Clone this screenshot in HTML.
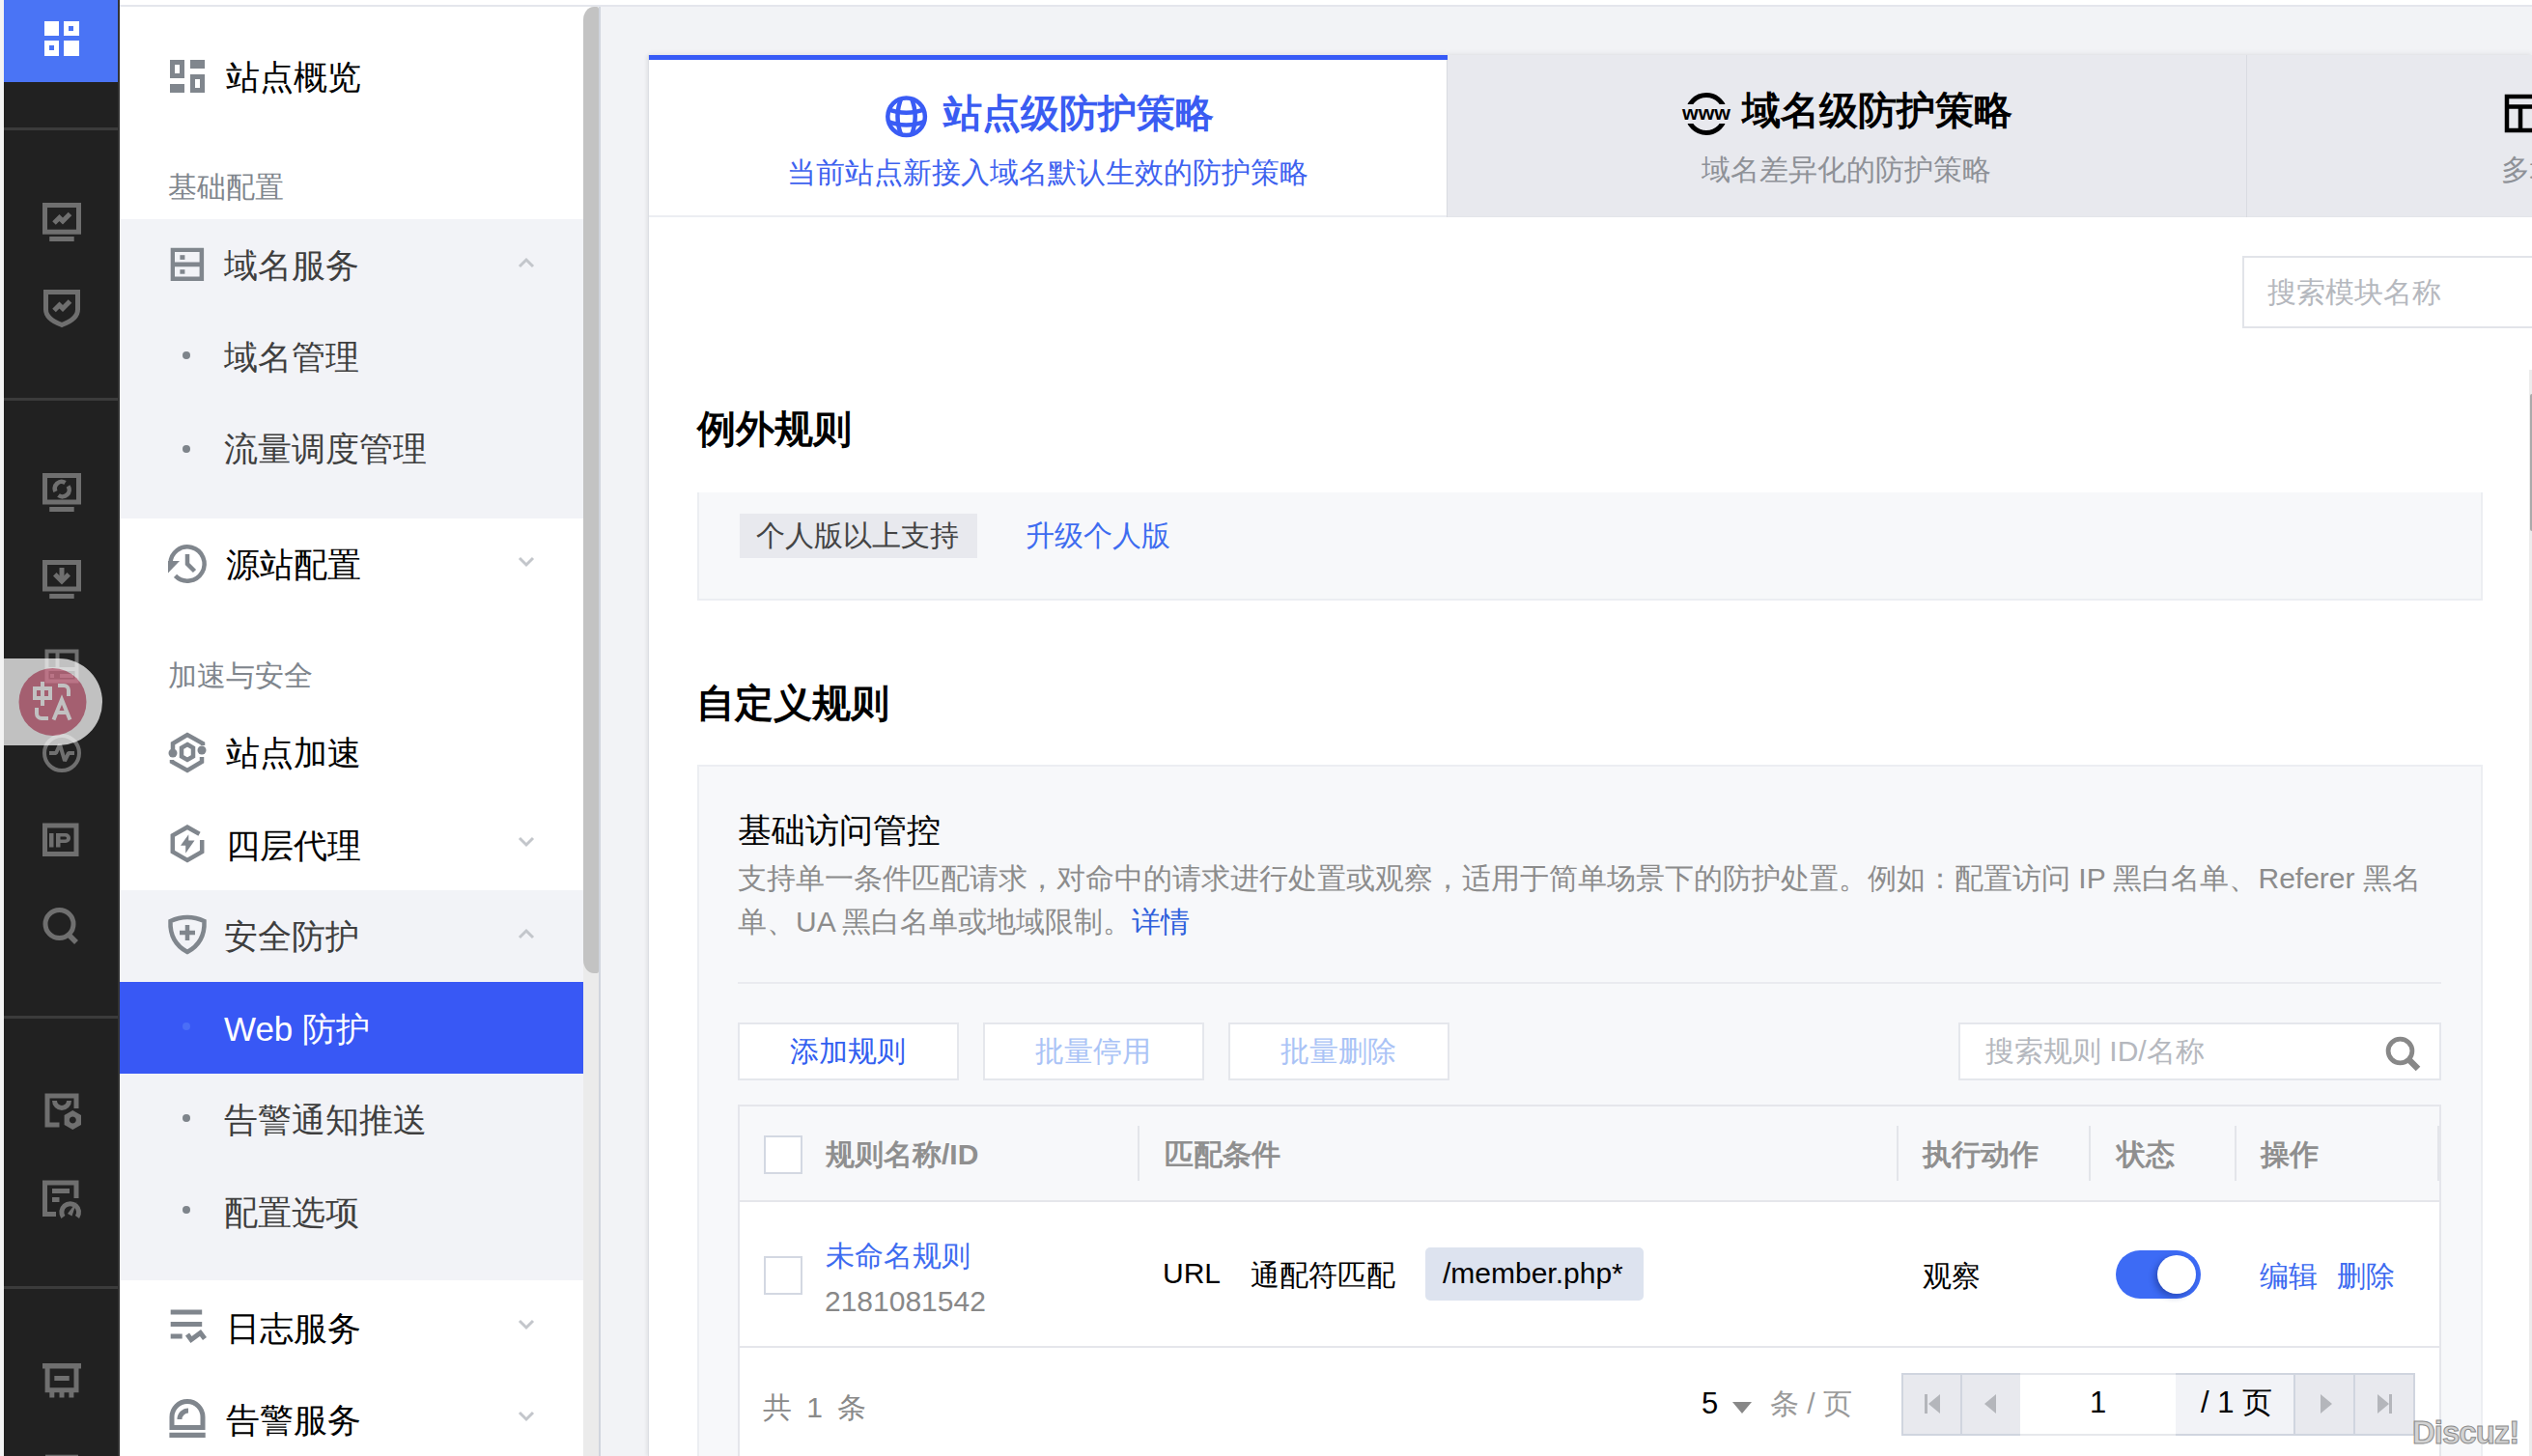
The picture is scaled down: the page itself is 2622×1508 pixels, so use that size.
<!DOCTYPE html>
<html><head><meta charset="utf-8">
<style>
*{margin:0;padding:0;box-sizing:border-box}
html,body{width:2622px;height:1508px;overflow:hidden;background:#fff;font-family:"Liberation Sans",sans-serif}
.a{position:absolute}
.t{position:absolute;white-space:nowrap;line-height:1}
.t i{display:inline-block;width:1em;font-style:normal;text-align:center}
#strip{left:0;top:0;width:4px;height:1508px;background:#f3f3f3}
#dark{left:4px;top:0;width:120px;height:1508px;background:#212121;border-right:2px solid #333}
#bluetop{left:4px;top:0;width:118px;height:85px;background:#4a74f5}
.sep{left:4px;width:118px;height:3px;background:#3b3b3b}
.ico{left:44px;width:40px;height:40px}
#menu{left:124px;top:0;width:480px;height:1508px;background:#fff}
.grp{left:124px;width:480px;background:#f2f3f7}
.mi{left:234px;font-size:35px;color:#000}
.mi2{left:232px;font-size:35px;color:#3f3f3f}
.hd{left:174px;font-size:30px;color:#80868d}
.dot{left:189px;width:8px;height:8px;border-radius:50%;background:#7e848b}
.chev{left:537px;width:16px;height:10px}
#topline{left:124px;top:5px;width:2498px;height:2px;background:#e4e6ec}
#right{left:622px;top:7px;width:2000px;height:1501px;background:#f2f3f6}
#sbtrack{left:604px;top:7px;width:18px;height:1501px;background:linear-gradient(#fff 0,#fff 980px,#ebebeb 980px);border-right:2px solid #d0d5de}
#sbthumb{left:604px;top:7px;width:16px;height:1001px;background:#c3c3c3;border-radius:11px 2px 2px 11px/14px 2px 2px 14px}
</style></head><body>
<div id="strip" class="a"></div>
<div id="dark" class="a"></div>
<div id="bluetop" class="a"></div>
<div class="a sep" style="top:132px"></div>
<div class="a sep" style="top:412px"></div>
<div class="a sep" style="top:1052px"></div>
<div class="a sep" style="top:1332px"></div>

<div id="menu" class="a"></div>
<div id="topline" class="a"></div>
<div id="right" class="a"></div>
<div id="sbtrack" class="a"></div>
<div id="sbthumb" class="a"></div>

<!-- menu groups -->
<div class="a grp" style="top:227px;height:310px"></div>
<div class="a grp" style="top:922px;height:404px"></div>
<div class="a" style="left:124px;top:1017px;width:480px;height:95px;background:#3858f5"></div>

<div class="t mi" style="top:62px"><i>站</i><i>点</i><i>概</i><i>览</i></div>
<div class="t hd" style="top:179px"><i>基</i><i>础</i><i>配</i><i>置</i></div>
<div class="t mi2" style="top:257px"><i>域</i><i>名</i><i>服</i><i>务</i></div>
<div class="a dot" style="top:364px"></div>
<div class="t mi2" style="top:352px"><i>域</i><i>名</i><i>管</i><i>理</i></div>
<div class="a dot" style="top:461px"></div>
<div class="t mi2" style="top:447px"><i>流</i><i>量</i><i>调</i><i>度</i><i>管</i><i>理</i></div>
<div class="t mi" style="top:567px"><i>源</i><i>站</i><i>配</i><i>置</i></div>
<div class="t hd" style="top:685px"><i>加</i><i>速</i><i>与</i><i>安</i><i>全</i></div>
<div class="t mi" style="top:762px"><i>站</i><i>点</i><i>加</i><i>速</i></div>
<div class="t mi" style="top:858px"><i>四</i><i>层</i><i>代</i><i>理</i></div>
<div class="t mi2" style="top:952px"><i>安</i><i>全</i><i>防</i><i>护</i></div>
<div class="t" style="left:232px;top:1048px;font-size:35px;color:#fff">Web <i>防</i><i>护</i></div>
<div class="a dot" style="top:1059px;background:#4a6ef7"></div>
<div class="a dot" style="top:1154px"></div>
<div class="t mi2" style="top:1142px"><i>告</i><i>警</i><i>通</i><i>知</i><i>推</i><i>送</i></div>
<div class="a dot" style="top:1249px"></div>
<div class="t mi2" style="top:1238px"><i>配</i><i>置</i><i>选</i><i>项</i></div>
<div class="t mi" style="top:1358px"><i>日</i><i>志</i><i>服</i><i>务</i></div>
<div class="t mi" style="top:1453px"><i>告</i><i>警</i><i>服</i><i>务</i></div>


<!-- menu icons -->
<svg class="a" style="left:124px;top:0" width="480" height="1508" viewBox="124 0 480 1508">
 <g fill="#80868d">
  <!-- overview -->
  <path d="M176 62h15v19h-15z M181 67v9h5v-9z" fill-rule="evenodd"/>
  <rect x="197" y="62" width="15" height="9"/>
  <rect x="176" y="87" width="15" height="9"/>
  <path d="M197 77h15v19h-15z M202 82v9h5v-9z" fill-rule="evenodd"/>
  <!-- domain service -->
  <path d="M176.7 256.7h34.4v34.4h-34.4z M181 261v10.4h25.6v-10.4z M181 276.3v10.1h25.6v-10.1z" fill-rule="evenodd"/>
  <rect x="186.4" y="264.2" width="5" height="4.7"/>
  <rect x="186.4" y="279.2" width="5" height="4.5"/>
 </g>
 <g fill="none" stroke="#80868d" stroke-width="4.5">
  <!-- origin: clock with arrow -->
  <path d="M181.5 596.4A17.6 17.6 0 1 0 176.4 584"/>
  <path d="M194 574v10l7.5 7.5" stroke-width="4.5"/>
  <!-- speed: hexagon ring -->
  <path d="M179 776v-6l15-9l16 9v2 M209 784v5l-15 9l-16-9v-2"/>
  <path d="M194 771l6 3.5v9l-6 3.5l-6-3.5v-9z" stroke-width="4.5"/>
  <!-- L4: hexagon -->
  <path d="M206.5 863.8L194 856.7L178.8 865.4V882.2L194 891L209.2 882.2V870" stroke-linejoin="miter"/>
  <!-- shield plus -->
  <path d="M176.5 954q17.5-8 35 0q1 22-17.5 32q-18.5-10-17.5-32z"/>
  <path d="M194 958v16 M186 966h16" stroke-width="4.5"/>
  <!-- log -->
  <path d="M176.7 1359h32.5 M176.7 1371.4h32.5 M176.7 1384h12" stroke-width="5"/>
  <path d="M194 1382l4 5.5l9.5-7l4.5 6" stroke-width="5" stroke-linejoin="miter"/>
  <!-- alarm -->
  <path d="M178 1478.5v-11a16 16 0 0 1 32 0v11z" stroke-width="5"/>
  <path d="M186 1470a9 9 0 0 1 9-9" stroke-width="5"/>
  <path d="M175.4 1486.4h37.3" stroke-width="5.3"/>
 </g>
 <g fill="#80868d">
  <circle cx="179" cy="780" r="4.5"/>
  <circle cx="209" cy="777" r="4.5"/>
  <path d="M195.3 864.3L187 875.8H192.2V883.7L201.5 870.5H195.3z"/>
  <path d="M174 581h12l-12 12.5z"/>
 </g>
 <g fill="none" stroke="#c3c6cb" stroke-width="3">
  <path d="M538 276l7-7 7 7"/>
  <path d="M538 971l7-7 7 7"/>
  <path d="M538 578l7 7 7-7"/>
  <path d="M538 868l7 7 7-7"/>
  <path d="M538 1368l7 7 7-7"/>
  <path d="M538 1463l7 7 7-7"/>
 </g>
</svg>
<!-- card -->
<div class="a" style="left:671px;top:57px;width:1951px;height:1451px;background:#fff;border-left:1px solid #dcdee3;box-shadow:-2px 0 3px rgba(0,0,0,0.06)"></div>
<div class="a" style="left:672px;top:223px;width:827px;height:2px;background:#eceef2"></div>
<div class="a" style="left:1499px;top:57px;width:1123px;height:168px;background:#e8e9ee;border-bottom:1px solid #e3e5ea;box-shadow:0 -3px 4px rgba(0,0,0,0.035)"></div>
<div class="a" style="left:2326px;top:57px;width:1px;height:168px;background:#d9dbe1"></div>
<div class="a" style="left:1498px;top:62px;width:1px;height:163px;background:#d9dbe1"></div>
<div class="a" style="left:672px;top:57px;width:827px;height:5px;background:#365af6;box-shadow:0 -3px 4px rgba(0,0,0,0.035)"></div>

<!-- sidebar icons -->
<svg class="a" style="left:0;top:0" width="124" height="1508" viewBox="0 0 124 1508">
 <g fill="#fff">
  <rect x="46" y="22" width="15" height="15"/>
  <path d="M66 22h16v15h-16z M71 27v5h5v-5z" fill-rule="evenodd"/>
  <path d="M46 42h15v16h-15z M51 47v5h5v-5z" fill-rule="evenodd"/>
  <rect x="66" y="42" width="16" height="16"/>
 </g>
 <g fill="none" stroke="#6f6f6f" stroke-width="4">
  <!-- monitor trend -->
  <rect x="46.5" y="212.5" width="35" height="27.7" stroke-width="5"/>
  <path d="M51.2 247.5h25.5" stroke-width="5"/>
  <path d="M56 231l5.5-5.5 3.5 3.5 7.5-7.5" stroke-width="5"/>
  <!-- shield trend -->
  <path d="M47.5 302.5h33v18q0 10-16.5 16q-16.5-6-16.5-16z" stroke-width="5"/>
  <path d="M56 321.5l5.5-5.5 3.5 3.5 7.5-7.5" stroke-width="5"/>
  <!-- monitor refresh -->
  <rect x="46.5" y="492.5" width="35" height="27.5" stroke-width="5"/>
  <path d="M51.2 527.5h25.5" stroke-width="5"/>
  <path d="M57.5 509a7 7 0 0 1 10-9 M70.5 503.5a7 7 0 0 1 -10 9.5" stroke-width="4.5"/>
  <!-- monitor download -->
  <rect x="46.5" y="582.5" width="35" height="27.5" stroke-width="5"/>
  <path d="M51.2 617.5h25.5" stroke-width="5"/>
  <path d="M64 588v12" stroke-width="5"/>
  <!-- partial icon behind overlay -->
  <rect x="48.5" y="674.5" width="31" height="31"/>
  <path d="M48 693h32 M59.5 674v19"/>
  <!-- pulse circle -->
  <circle cx="64" cy="780" r="18"/>
  <path d="M51 780h7l4-9l5 17l4-8h6" stroke-width="4" stroke-linejoin="bevel"/>
  <!-- IP -->
  <rect x="46.5" y="855" width="32.5" height="29.5" stroke-width="5"/>
  <!-- search -->
  <circle cx="61.5" cy="957" r="14.5" stroke-width="5"/>
  <path d="M71 968l8 8" stroke-width="5.5"/>
  <!-- doc nut -->
  <path d="M79 1148v-13h-30v30h12.5" stroke-width="5"/>
  <path d="M56.5 1140a7.5 7.5 0 0 0 15 0" stroke-width="5"/>
  <!-- doc gauge -->
  <path d="M79 1241v-16h-32.5v32.5h11.5" stroke-width="5"/>
  <path d="M54 1233.5h18 M54 1242.5h7.5" stroke-width="5"/>
  <path d="M65.4 1260.5A8.85 8.85 0 1 1 80 1260.5" stroke-width="5"/>
  <!-- router -->
  <path d="M44 1414.8h40" stroke-width="5.6"/>
  <path d="M49.1 1417v22.8h29.9v-22.8" stroke-width="5"/>
  <path d="M56.3 1427.5h15.4" stroke-width="5"/>
  <path d="M53.8 1442v5.5 M64 1442v5.5 M73.9 1442v5.5" stroke-width="5"/>
  <rect x="47" y="1506.7" width="34" height="4" fill="#6f6f6f" stroke="none"/>
 </g>
 <g fill="#6f6f6f">
  <path d="M51 863h4.5v14.5h-4.5z M58 863h10a5 5 0 0 1 0 10h-5.5v4.5h-4.5z M62.5 866.5v3h5a1.5 1.5 0 0 0 0-3z" fill-rule="evenodd"/>
  <path d="M75.3 1150l8.7 5v10l-8.7 5l-8.7-5v-10z M75.3 1156.5a3.5 3.5 0 1 0 0.01 0z" fill-rule="evenodd"/>
  <path d="M79.5 1244.5L70 1257L74.5 1259.5z"/>
  <rect x="52" y="698" width="4" height="4"/>
  <path d="M55 596.5l3.5-3.5 5.5 5.5 5.5-5.5 3.5 3.5-9 9z"/>
  <rect x="62" y="698" width="14" height="4"/>
 </g>
 
</svg>
<!-- translate overlay -->
<svg class="a" style="left:0;top:660px;opacity:0.72" width="124" height="140" viewBox="0 660 124 140">
 <path d="M4 682h57a45 45 0 0 1 0 90h-57z" fill="#fff"/>
 <circle cx="54.5" cy="727" r="35" fill="#d7778f"/>
 <g fill="none" stroke="#fff" stroke-width="4">
  <rect x="36" y="713" width="16" height="10"/>
  <path d="M44 706v25"/>
  <path d="M60 710h6a5 5 0 0 1 5 5v6"/>
  <path d="M38 733v6a5 5 0 0 0 5 5h7"/>
  <path d="M55.5 745.5l8.5-21l8.5 21 M59 738h10"/>
 </g>
</svg>

<!-- tabs content -->
<svg class="a" style="left:914px;top:97px" width="48" height="48" viewBox="0 0 48 48">
 <defs><clipPath id="gc"><circle cx="24.6" cy="23.7" r="20"/></clipPath></defs>
 <g fill="none" stroke="#3a5cf5" stroke-width="4.5">
  <circle cx="24.6" cy="23.7" r="19.3"/>
  <g clip-path="url(#gc)">
  <path d="M4 15.5Q24.6 24 45 15.5 M4 28Q24.6 37 45 28"/>
  <path d="M20 3Q11 23.7 20 44.5 M29.2 3Q38.2 23.7 29.2 44.5"/>
  </g>
 </g>
</svg>
<div class="t" style="left:977px;top:97px;font-size:40px;font-weight:bold;color:#3a5cf2"><i>站</i><i>点</i><i>级</i><i>防</i><i>护</i><i>策</i><i>略</i></div>
<div class="t" style="left:815px;top:164px;font-size:30px;color:#3e62ef"><i>当</i><i>前</i><i>站</i><i>点</i><i>新</i><i>接</i><i>入</i><i>域</i><i>名</i><i>默</i><i>认</i><i>生</i><i>效</i><i>的</i><i>防</i><i>护</i><i>策</i><i>略</i></div>
<svg class="a" style="left:1740px;top:93px" width="56" height="50" viewBox="0 0 56 50">
 <defs><clipPath id="wc"><path d="M0 0h56v15h-56z M0 35h56v15h-56z"/></clipPath></defs>
 <circle cx="27" cy="25" r="19.5" fill="none" stroke="#000" stroke-width="5" clip-path="url(#wc)"/>
 <text x="27" y="31" font-family="Liberation Sans" font-weight="bold" font-size="21" text-anchor="middle" fill="#000" textLength="50" lengthAdjust="spacingAndGlyphs">www</text>
</svg>
<div class="t" style="left:1804px;top:94px;font-size:40px;font-weight:bold;color:#000"><i>域</i><i>名</i><i>级</i><i>防</i><i>护</i><i>策</i><i>略</i></div>
<div class="t" style="left:1762px;top:161px;font-size:30px;color:#8e9197"><i>域</i><i>名</i><i>差</i><i>异</i><i>化</i><i>的</i><i>防</i><i>护</i><i>策</i><i>略</i></div>
<svg class="a" style="left:2592px;top:97px" width="40" height="42" viewBox="0 0 40 42">
 <g fill="none" stroke="#000" stroke-width="4.5">
  <rect x="4" y="3" width="36" height="35"/>
  <path d="M4 13.5h36 M18 13.5v24.5"/>
 </g>
</svg>
<div class="t" style="left:2590px;top:161px;font-size:30px;color:#8e9197"><i>多</i><i>域</i><i>名</i></div>

<!-- module search -->
<div class="a" style="left:2322px;top:265px;width:330px;height:75px;background:#fff;border:2px solid #e2e4e9"></div>
<div class="t" style="left:2348px;top:288px;font-size:30px;color:#b5b8be"><i>搜</i><i>索</i><i>模</i><i>块</i><i>名</i><i>称</i></div>

<!-- exception rules -->
<div class="t" style="left:722px;top:424px;font-size:40px;font-weight:bold;color:#000"><i>例</i><i>外</i><i>规</i><i>则</i></div>
<div class="a" style="left:722px;top:510px;width:1849px;height:112px;background:#f7f8fa;border:2px solid #eceef2;border-top:none"></div>
<div class="a" style="left:766px;top:532px;width:246px;height:46px;background:#e8e9ee"></div>
<div class="t" style="left:783px;top:540px;font-size:30px;color:#444"><i>个</i><i>人</i><i>版</i><i>以</i><i>上</i><i>支</i><i>持</i></div>
<div class="t" style="left:1062px;top:540px;font-size:30px;color:#3e6cf0"><i>升</i><i>级</i><i>个</i><i>人</i><i>版</i></div>

<!-- custom rules -->
<div class="t" style="left:721px;top:708px;font-size:40px;font-weight:bold;color:#000"><i>自</i><i>定</i><i>义</i><i>规</i><i>则</i></div>
<div class="a" style="left:722px;top:792px;width:1849px;height:760px;background:#f7f8fa;border:2px solid #eceef2"></div>
<div class="t" style="left:764px;top:842px;font-size:35px;color:#000"><i>基</i><i>础</i><i>访</i><i>问</i><i>管</i><i>控</i></div>
<div class="t" style="left:764px;top:895px;font-size:30px;color:#8c8c8c"><i>支</i><i>持</i><i>单</i><i>一</i><i>条</i><i>件</i><i>匹</i><i>配</i><i>请</i><i>求</i><i>，</i><i>对</i><i>命</i><i>中</i><i>的</i><i>请</i><i>求</i><i>进</i><i>行</i><i>处</i><i>置</i><i>或</i><i>观</i><i>察</i><i>，</i><i>适</i><i>用</i><i>于</i><i>简</i><i>单</i><i>场</i><i>景</i><i>下</i><i>的</i><i>防</i><i>护</i><i>处</i><i>置</i><i>。</i><i>例</i><i>如</i><i>：</i><i>配</i><i>置</i><i>访</i><i>问</i> IP <i>黑</i><i>白</i><i>名</i><i>单</i><i>、</i>Referer <i>黑</i><i>名</i></div>
<div class="t" style="left:764px;top:940px;font-size:30px;color:#8c8c8c"><i>单</i><i>、</i>UA <i>黑</i><i>白</i><i>名</i><i>单</i><i>或</i><i>地</i><i>域</i><i>限</i><i>制</i><i>。</i><span style="color:#2f60dc"><i>详</i><i>情</i></span></div>
<div class="a" style="left:764px;top:1017px;width:1764px;height:2px;background:#eaebef"></div>

<div class="a" style="left:764px;top:1059px;width:229px;height:60px;background:#fff;border:2px solid #e5e7ec"></div>
<div class="t" style="left:818px;top:1074px;font-size:30px;color:#3360f0"><i>添</i><i>加</i><i>规</i><i>则</i></div>
<div class="a" style="left:1018px;top:1059px;width:229px;height:60px;background:#fff;border:2px solid #e5e7ec"></div>
<div class="t" style="left:1072px;top:1074px;font-size:30px;color:#aac3f6"><i>批</i><i>量</i><i>停</i><i>用</i></div>
<div class="a" style="left:1272px;top:1059px;width:229px;height:60px;background:#fff;border:2px solid #e5e7ec"></div>
<div class="t" style="left:1326px;top:1074px;font-size:30px;color:#aac3f6"><i>批</i><i>量</i><i>删</i><i>除</i></div>

<div class="a" style="left:2028px;top:1059px;width:500px;height:60px;background:#fff;border:2px solid #e5e7ec"></div>
<div class="t" style="left:2056px;top:1074px;font-size:30px;color:#b5b8be"><i>搜</i><i>索</i><i>规</i><i>则</i> ID/<i>名</i><i>称</i></div>
<svg class="a" style="left:2466px;top:1071px" width="42" height="40" viewBox="0 0 42 40">
 <g fill="none" stroke="#888" stroke-width="4.8">
  <circle cx="19.5" cy="17.5" r="12.4"/>
  <path d="M28.5 26.5l9.5 9.5" stroke-width="6.5"/>
 </g>
</svg>

<!-- table -->
<div class="a" style="left:764px;top:1144px;width:1764px;height:400px;background:#fff;border:2px solid #e5e6eb"></div>
<div class="a" style="left:766px;top:1146px;width:1760px;height:99px;background:#f7f8fa;border-bottom:2px solid #e5e6eb"></div>
<div class="a" style="left:766px;top:1394px;width:1760px;height:2px;background:#e5e6eb"></div>
<div class="a" style="left:1178px;top:1166px;width:2px;height:57px;background:#e3e5ea"></div>
<div class="a" style="left:1964px;top:1166px;width:2px;height:57px;background:#e3e5ea"></div>
<div class="a" style="left:2163px;top:1166px;width:2px;height:57px;background:#e3e5ea"></div>
<div class="a" style="left:2314px;top:1166px;width:2px;height:57px;background:#e3e5ea"></div>
<div class="a" style="left:2524px;top:1166px;width:2px;height:57px;background:#e3e5ea"></div>
<div class="a" style="left:791px;top:1176px;width:40px;height:40px;background:#fff;border:2px solid #d3d8e2"></div>
<div class="t" style="left:855px;top:1181px;font-size:30px;font-weight:bold;color:#8f8f8f"><i>规</i><i>则</i><i>名</i><i>称</i>/ID</div>
<div class="t" style="left:1206px;top:1181px;font-size:30px;font-weight:bold;color:#8f8f8f"><i>匹</i><i>配</i><i>条</i><i>件</i></div>
<div class="t" style="left:1991px;top:1181px;font-size:30px;font-weight:bold;color:#8f8f8f"><i>执</i><i>行</i><i>动</i><i>作</i></div>
<div class="t" style="left:2192px;top:1181px;font-size:30px;font-weight:bold;color:#8f8f8f"><i>状</i><i>态</i></div>
<div class="t" style="left:2341px;top:1181px;font-size:30px;font-weight:bold;color:#8f8f8f"><i>操</i><i>作</i></div>

<div class="a" style="left:791px;top:1301px;width:40px;height:40px;background:#fff;border:2px solid #d3d8e2"></div>
<div class="t" style="left:855px;top:1286px;font-size:30px;color:#3d6bf0"><i>未</i><i>命</i><i>名</i><i>规</i><i>则</i></div>
<div class="t" style="left:854px;top:1333px;font-size:30px;color:#888">2181081542</div>
<div class="t" style="left:1204px;top:1304px;font-size:30px;color:#000">URL</div>
<div class="t" style="left:1295px;top:1306px;font-size:30px;color:#000"><i>通</i><i>配</i><i>符</i><i>匹</i><i>配</i></div>
<div class="a" style="left:1476px;top:1292px;width:226px;height:55px;background:#dde3ef;border-radius:5px"></div>
<div class="t" style="left:1494px;top:1304px;font-size:30px;color:#000">/member.php*</div>
<div class="t" style="left:1991px;top:1307px;font-size:30px;color:#000"><i>观</i><i>察</i></div>
<div class="a" style="left:2191px;top:1295px;width:88px;height:50px;border-radius:25px;background:#3d6bf5"></div>
<div class="a" style="left:2234px;top:1300px;width:40px;height:40px;border-radius:50%;background:#fff;box-shadow:-3px 3px 6px rgba(20,40,120,0.45)"></div>
<div class="t" style="left:2340px;top:1307px;font-size:30px;color:#3d6bf0"><i>编</i><i>辑</i></div>
<div class="t" style="left:2420px;top:1307px;font-size:30px;color:#3d6bf0"><i>删</i><i>除</i></div>

<!-- footer -->
<div class="t" style="left:790px;top:1443px;font-size:30px;color:#8a8a8a;word-spacing:7px"><i>共</i> 1 <i>条</i></div>
<div class="t" style="left:1762px;top:1438px;font-size:31px;color:#000">5</div>
<svg class="a" style="left:1794px;top:1452px" width="20" height="12" viewBox="0 0 20 12"><path d="M0 0h20l-10 12z" fill="#888"/></svg>
<div class="t" style="left:1833px;top:1439px;font-size:30px;color:#999"><i>条</i> / <i>页</i></div>

<div class="a" style="left:1969px;top:1422px;width:532px;height:65px;background:#e8e9ee;border:2px solid #d0d5df"></div>
<div class="a" style="left:2030px;top:1424px;width:2px;height:61px;background:#d0d5df"></div>
<div class="a" style="left:2092px;top:1422px;width:161px;height:65px;background:#fff;border-top:2px solid #e6e8ec;border-bottom:2px solid #e6e8ec"></div>
<div class="a" style="left:2253px;top:1424px;width:124px;height:61px;background:#f2f3f7;border-right:2px solid #d0d5df"></div>
<div class="a" style="left:2437px;top:1424px;width:2px;height:61px;background:#d0d5df"></div>
<div class="t" style="left:2164px;top:1437px;font-size:31px;color:#000">1</div>
<div class="t" style="left:2279px;top:1437px;font-size:31px;color:#000">/ 1 <i>页</i></div>
<svg class="a" style="left:1969px;top:1422px" width="532" height="65" viewBox="1969 1422 532 65">
 <g fill="#b4b6bb">
  <rect x="1993" y="1444" width="3" height="20"/>
  <path d="M2009 1444v20l-12-10z"/>
  <path d="M2067 1444v20l-12-10z"/>
  <path d="M2403 1444v20l12-10z"/>
  <path d="M2462 1444v20l12-10z"/>
  <rect x="2474" y="1444" width="3" height="20"/>
 </g>
</svg>
<!-- right scrollbar -->
<div class="a" style="left:2619px;top:383px;width:3px;height:1125px;background:#ececec"></div>
<div class="a" style="left:2620px;top:408px;width:2px;height:142px;background:#aaa;border-radius:2px 0 0 2px"></div>
<!-- watermark -->
<svg class="a" style="left:2494px;top:1462px" width="120" height="40" viewBox="0 0 120 40">
 <text x="4" y="33" font-family="Liberation Sans" font-weight="bold" font-size="33" fill="#d3d3d3" stroke="#8a8a8a" stroke-width="1" letter-spacing="-1">Discuz!</text>
</svg>
</body></html>
